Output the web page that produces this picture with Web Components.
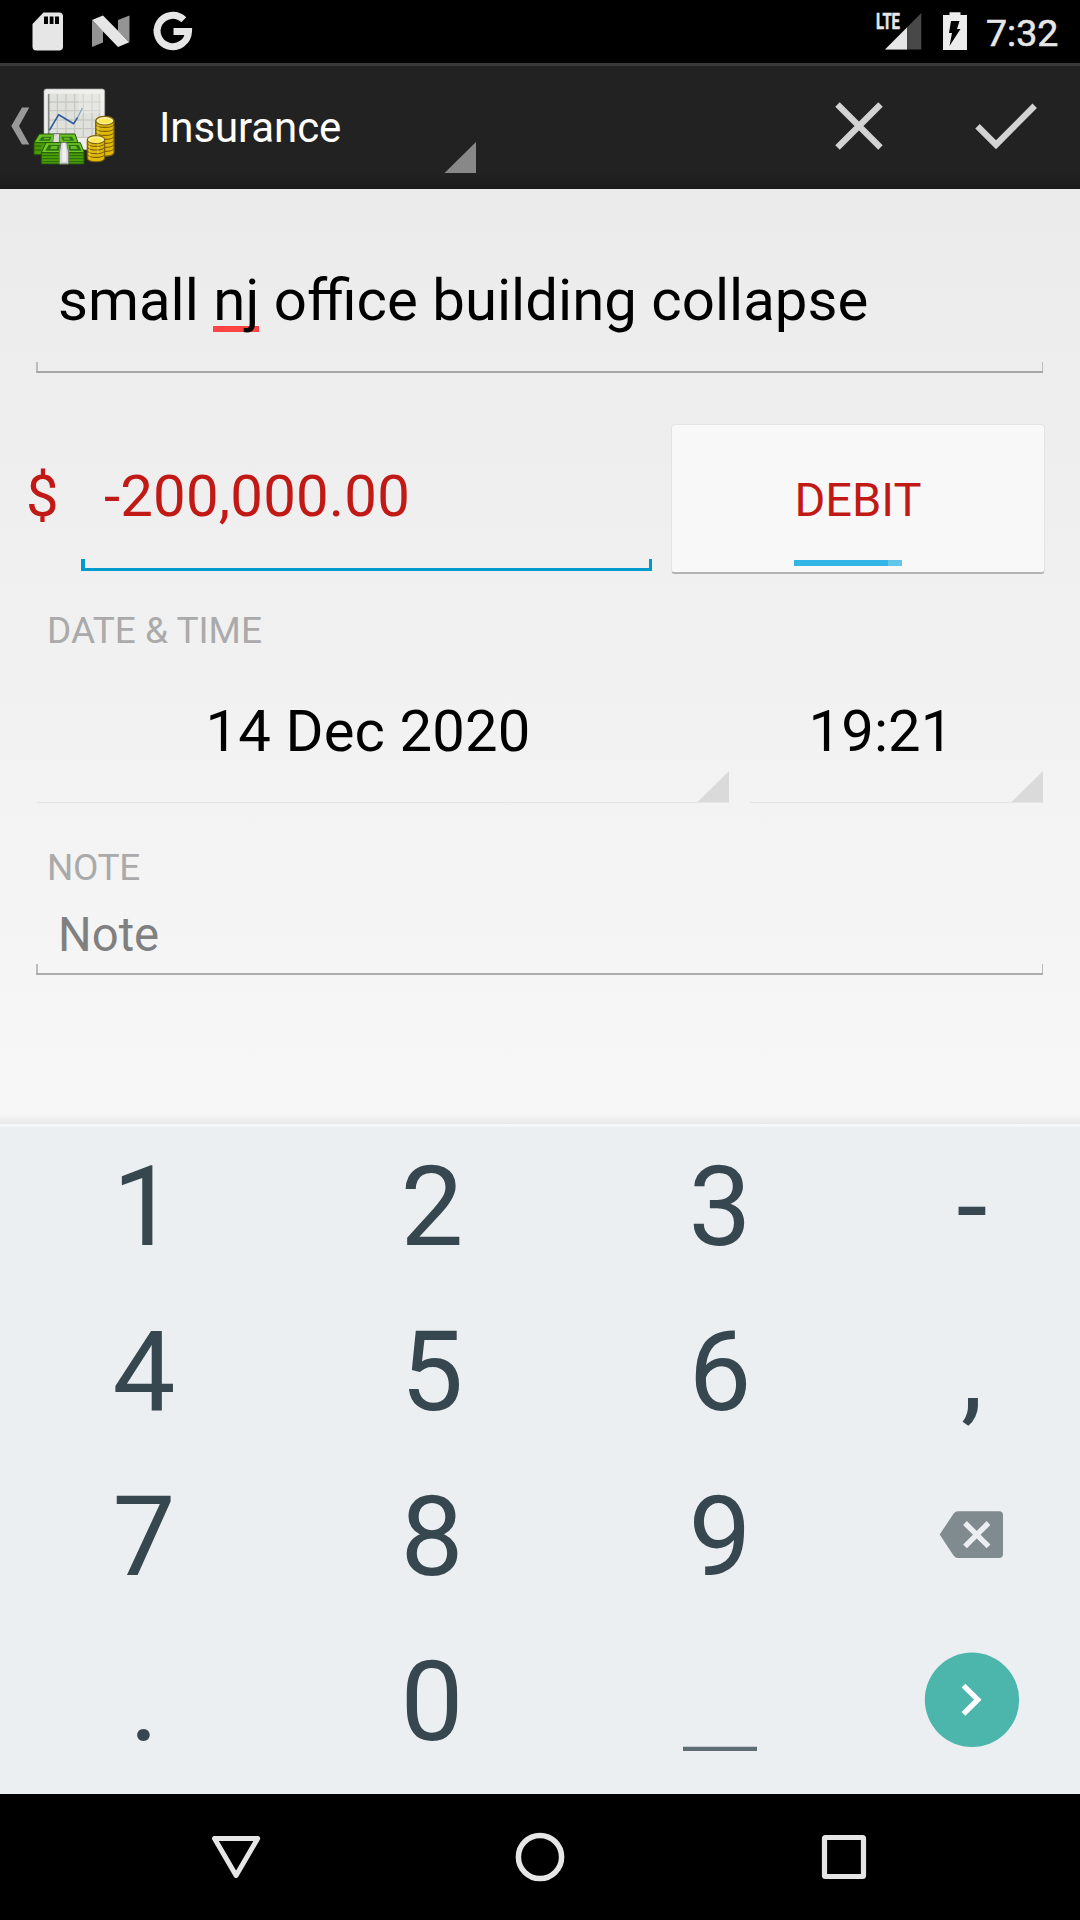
<!DOCTYPE html>
<html lang="en">
<head>
<meta charset="utf-8">
<title>Insurance</title>
<style>
html,body{margin:0;padding:0}
body{width:1080px;height:1920px;overflow:hidden;background:#000;font-family:Roboto,"Noto Sans",sans-serif}
</style>
</head>
<body>
<expense-app></expense-app>
<script>
const define = (name, css, html) => {
  const tpl = document.createElement('template');
  tpl.innerHTML = `<style>*{box-sizing:border-box}svg{display:block;flex:none}${css}</style>${html}`;
  customElements.define(name, class extends HTMLElement {
    constructor() {
      super();
      this.attachShadow({mode: 'open'}).append(tpl.content.cloneNode(true));
    }
  });
};

define('status-bar', `
:host{display:flex;height:63px;background:#000;justify-content:space-between;align-items:flex-start;color:#e6e6e6}
.clock{font-size:37.500px;font-weight:400;line-height:67px;height:63px;width:96px;padding-left:2px;-webkit-text-stroke:.6px #e6e6e6}
.right{display:flex}`, `
<svg width="220" height="63" viewBox="0 0 220 63">
  <path d="M43.5 12.5H59a4 4 0 0 1 4 4V46.500a4 4 0 0 1-4 4H36.500a4 4 0 0 1-4-4V24z" fill="#e6e6e6"/>
  <path d="M44 16.500h4v7.500h-4zM49.700 16.500h3.800v7.500h-3.800zM55 16.500h4v7.500h-4z" fill="#000"/>
  <path d="M92 20.500 103 31V42.500L92 47zM118 20 129.500 15.500V42L118 31z" fill="#949494"/>
  <path d="M92 20 103 15.500 129.300 42.300 118 47z" fill="#e6e6e6"/>
  <path d="M183.800 19.800A15.700 15.700 0 1 0 188.500 31.500H173.500" fill="none" stroke="#e6e6e6" stroke-width="7"/>
</svg>
<div class="right">
  <svg width="124" height="63" viewBox="860 0 124 63">
    <path d="M885 49.500 921.300 13V49.500z" fill="#484848"/>
    <path d="M885 49.500 907 27.400V49.500z" fill="#e6e6e6"/>
    <text x="876" y="29" font-family="Roboto" font-weight="700" font-size="21.500" textLength="24" lengthAdjust="spacingAndGlyphs" fill="#e6e6e6" stroke="#e6e6e6" stroke-width=".5">LTE</text>
    <path d="M949.500 12.300h11v2.700h6.500v35h-24V15h6.500z" fill="#ececec"/>
    <path d="M951 21h8.500l-2.500 8h3.500L949.500 46l2.500-13h-3z" fill="#000"/>
  </svg>
  <div class="clock">7:32</div>
</div>`);

define('action-bar', `
:host{display:flex;height:126px;border-top:3px solid #393939;background:linear-gradient(#222 0,#222 108px,#1d1d1d 118px,#1a1a1a 123px);color:#fff}
.title{width:324px;height:123px;padding-left:7px;font-size:42px;letter-spacing:-.1px;line-height:123px;flex:none}
.spin{width:324px;display:flex;align-items:flex-start}
.acts{margin-left:auto;display:flex}`, `
<svg width="152" height="123" viewBox="0 66 152 123">
  <path d="M22 107.500h7.300L19 126l10.300 18.500H22L11.300 126z" fill="#999"/>
  <g transform="translate(20 70) scale(.33333)" stroke-linejoin="round">
    <rect x="72" y="57" width="182" height="182" rx="7" fill="#eeeeec" stroke="#aaa" stroke-width="2"/>
    <rect x="84" y="71" width="158" height="132" fill="#e0e1dc"/>
    <path d="M112 72V200M138 72V200M164 72V200M190 72V200M216 72V200M238 72V200M84 96H242M84 122H242M84 150H242M84 176H242M84 202H242" stroke="#c6c9c2" stroke-width="4"/>
    <path d="M86 72V200" stroke="#888a85" stroke-width="5"/>
    <path d="M175 60h76v70h-76z" fill="#f4f4f2" opacity=".35"/>
    <path d="M88 181 116 134 161 161 173 142" fill="none" stroke="#2f5c9c" stroke-width="5"/>
    <path d="M173 142 187 114" stroke="#8aa4c6" stroke-width="4"/>
    <g stroke="#1f5505" stroke-width="3">
      <path d="M42 216V254H90V216z" fill="#4e9a06"/>
      <path d="M58 192H165L174 218H42z" fill="#6cc025"/>
    </g>
    <path d="M43 228H64M43 240H64" stroke="#236003" stroke-width="3"/>
    <path d="M66 200h28l-4 12H56zM124 200h32l7 12h-34z" fill="#2c7410"/>
    <path d="M74 203h15l-3 5H70zM130 203h18l3 6h-18z" fill="#66ba27"/>
    <path d="M102 191h17l-1 27H98z" fill="#ddd" stroke="#777" stroke-width="3"/>
    <g stroke="#1f5505" stroke-width="3">
      <path d="M64 248H192V282H64z" fill="#4a9f07"/>
      <path d="M78 218H181L193 248H64z" fill="#72c82a"/>
    </g>
    <path d="M64 257H192M64 266H192M64 275H192" stroke="#28650a" stroke-width="3"/>
    <path d="M86 224h34l-3 18H76zM145 224h31l9 18h-37z" fill="#2c7410"/>
    <path d="M95 228h18l-2 9H90zM151 228h17l5 9h-20z" fill="#66ba27"/>
    <path d="M123 218h17l6 30v34h-28v-34z" fill="#d3d7cf" stroke="#777" stroke-width="3"/>
    <path d="M128 219h8l3 28v28h-12v-28z" fill="#f0f0f0"/>
    <g stroke="#806008" stroke-width="3.500">
      <path d="M227 152V248C228 262 280 262 282 248V152z" fill="#dfba08"/>
      <path d="M227 163c4 12 51 12 55 0M227 175c4 12 51 12 55 0M227 187c4 12 51 12 55 0M227 199c4 12 51 12 55 0M227 211c4 12 51 12 55 0M227 223c4 12 51 12 55 0M227 235c4 12 51 12 55 0" fill="none"/>
      <ellipse cx="254.500" cy="152" rx="27" ry="13" fill="#fbf1a5"/>
      <path d="M202 210V264C204 279 252 279 254 264V210z" fill="#dfba08"/>
      <path d="M202 220c4 12 48 12 52 0M202 231c4 12 48 12 52 0M202 242c4 12 48 12 52 0M202 253c4 12 48 12 52 0" fill="none"/>
      <ellipse cx="228" cy="209" rx="26" ry="12" fill="#fbf1a5"/>
    </g>
    <ellipse cx="254.500" cy="153" rx="19" ry="7" fill="#fce94f"/>
    <ellipse cx="228" cy="210" rx="18" ry="7" fill="#fce94f"/>
    <path d="M234 165V252M209 222V266" stroke="#fff27a" stroke-width="4" opacity=".35"/>
  </g>
</svg>
<div class="spin"><div class="title"><slot></slot></div>
  <svg width="40" height="123" viewBox="0 0 40 123" style="margin-left:-40px"><path d="M8.500 107 40 76V107z" fill="#888"/></svg>
</div>
<div class="acts">
  <svg width="144" height="123" viewBox="787 66 144 123"><path d="M837.500 104.500 880.500 147.500M880.500 104.500 837.500 147.500" stroke="#d3d3d3" stroke-width="6.300"/></svg>
  <svg width="149" height="123" viewBox="931 66 149 123"><path d="M977.500 126.300 996 144.800 1034.700 105.800" fill="none" stroke="#d3d3d3" stroke-width="6.300"/></svg>
</div>`);

define('text-field', `
:host{display:flex;flex-direction:column;font-size:58.150px;--line:#a6a6a6;--tick:#bcbcbc;--w:2px;--tw:1.500px;--th:9px;--lh:145px;--box:var(--lh)}
.text{height:var(--box);line-height:var(--lh);padding-left:var(--pad,22px);white-space:pre}
.line{height:calc(var(--th) + var(--w));margin-top:calc(0px - var(--th) - var(--w));border-bottom:var(--w) solid var(--line);display:flex;justify-content:space-between}
.line i{width:var(--tw);height:var(--th);background:var(--tick)}`, `
<div class="text"><slot></slot></div><div class="line"><i></i><i></i></div>`);

define('spell-mark', `
:host{display:inline;background:linear-gradient(#f44,#f44) 0 60px/100% 6px no-repeat}`, `<slot></slot>`);

define('toggle-button', `
:host{display:flex;flex-direction:column;align-items:center;width:374px;height:150px;background:#f8f8f8;border:1px solid #e3e3e3;border-bottom:2px solid #b3b3b3;border-radius:4px;color:#c11a16;font-size:47px}
.label{height:135px;line-height:150px;flex:none}
.strip{width:108px;height:6px;margin-right:20px;background:linear-gradient(90deg,#33b5e5 94px,#62c5ea 94px)}`, `
<div class="label"><slot></slot></div><div class="strip"></div>`);

define('section-label', `
:host{display:block;height:49px;line-height:49px;font-size:37px;color:#aaa;padding-left:47px}`, `<slot></slot>`);

define('spinner-field', `
:host{display:flex;height:143px;border-bottom:1.500px solid #e4e4e4;font-size:58px;letter-spacing:.14px;color:#000;justify-content:center}
.value{flex:1;text-align:center;line-height:143px;padding-right:var(--shift,30px)}
svg{align-self:flex-end;margin-left:-32px}`, `
<div class="value"><slot></slot></div>
<svg width="32" height="31" viewBox="0 0 32 31"><path d="M0.500 31 32 0V31z" fill="#dadada"/></svg>`);

define('entry-form', `
:host{display:flex;flex-direction:column;height:935px;background:linear-gradient(transparent 925px,rgba(0,0,0,.06) 935px),linear-gradient(#ebebeb,#f7f7f7)}
.title{margin:39px 37px 0 36px;height:145px}
.amount{display:flex;margin-top:51px;height:150px;color:#c11a16;font-size:58px}
.cur{width:81px;padding-left:26px;line-height:145px}
.amount text-field{width:571px;height:147px;--line:#0099cc;--tick:#0099cc;--w:3px;--tw:3.500px;--th:9px;--lh:147px;--pad:23px;margin-right:19px}
.amount .v{display:block;margin-top:-1px;letter-spacing:.16px}
.l1{margin-top:32px}
.dates{display:flex;gap:21px;margin:5px 37px 0 37px}
.d1{width:692px}.d2{flex:1;--shift:31px}
.l2{margin-top:40px;letter-spacing:-.4px}
.note{margin:0 37px 0 36px;height:83px;font-size:47.250px;color:#808080;--line:#adadad;--lh:86px;--box:83px}`, `
<text-field class="title">small <spell-mark>nj</spell-mark> office building collapse</text-field>
<div class="amount"><div class="cur">$</div><text-field><span class="v">-200,000.00</span></text-field><toggle-button>DEBIT</toggle-button></div>
<section-label class="l1">DATE &amp; TIME</section-label>
<div class="dates"><spinner-field class="d1">14 Dec 2020</spinner-field><spinner-field class="d2">19:21</spinner-field></div>
<section-label class="l2">NOTE</section-label>
<text-field class="note">Note</text-field>`);

define('pad-key', `
:host{display:flex;height:165px;align-items:center;justify-content:center;line-height:165px}`, `<slot></slot>`);

define('number-pad', `
:host{display:grid;grid-template-columns:288px 288px 288px 216px;grid-auto-rows:165px;height:670px;background:linear-gradient(#f4f6f8 3px,#ebeff2 3px);color:#37474f;font-size:112px}`, `
<pad-key>1</pad-key><pad-key>2</pad-key><pad-key>3</pad-key><pad-key>-</pad-key>
<pad-key>4</pad-key><pad-key>5</pad-key><pad-key>6</pad-key><pad-key>,</pad-key>
<pad-key>7</pad-key><pad-key>8</pad-key><pad-key>9</pad-key>
<pad-key><svg width="216" height="165" viewBox="864 1454 216 165">
  <path d="M958 1511.200H999a4 4 0 0 1 4 4V1554a4 4 0 0 1-4 4H958q-2.500 0-4.300-2.200L939.700 1534.600 953.700 1513.400q1.800-2.200 4.300-2.200z" fill="#808b8f"/>
  <path d="M965 1523 988.500 1546.300M988.500 1523 965 1546.300" stroke="#ebeff2" stroke-width="5.300"/></svg></pad-key>
<pad-key>.</pad-key><pad-key>0</pad-key>
<pad-key><svg width="288" height="165" viewBox="576 1619 288 165"><path d="M683 1746.700H757V1751H683z" fill="#5f6e74"/></svg></pad-key>
<pad-key><svg width="216" height="165" viewBox="864 1619 216 165">
  <circle cx="972" cy="1699.800" r="47.200" fill="#4db6ac"/>
  <path d="M963.500 1685.600 977.800 1699.700 963.500 1713.800" fill="none" stroke="#fff" stroke-width="5.300"/></svg></pad-key>`);

define('nav-bar', `
:host{display:flex;height:126px;background:#000;justify-content:center;align-items:center;gap:204px}`, `
<svg width="100" height="126" viewBox="186 1794 100 126"><path d="M214.500 1838.500H257.700L236.100 1875.500z" fill="none" stroke="#e6e6e6" stroke-width="5" stroke-linejoin="round"/></svg>
<svg width="100" height="126" viewBox="490 1794 100 126"><circle cx="540" cy="1857" r="21.600" fill="none" stroke="#e6e6e6" stroke-width="5.500"/></svg>
<svg width="100" height="126" viewBox="794 1794 100 126"><rect x="824.500" y="1837.500" width="39" height="39" rx="1" fill="none" stroke="#e6e6e6" stroke-width="5.200" stroke-linejoin="round"/></svg>`);

define('expense-app', `
:host{display:flex;flex-direction:column;width:1080px;height:1920px}`, `
<status-bar></status-bar>
<action-bar>Insurance</action-bar>
<entry-form></entry-form>
<number-pad></number-pad>
<nav-bar></nav-bar>`);
</script>
</body>
</html>
